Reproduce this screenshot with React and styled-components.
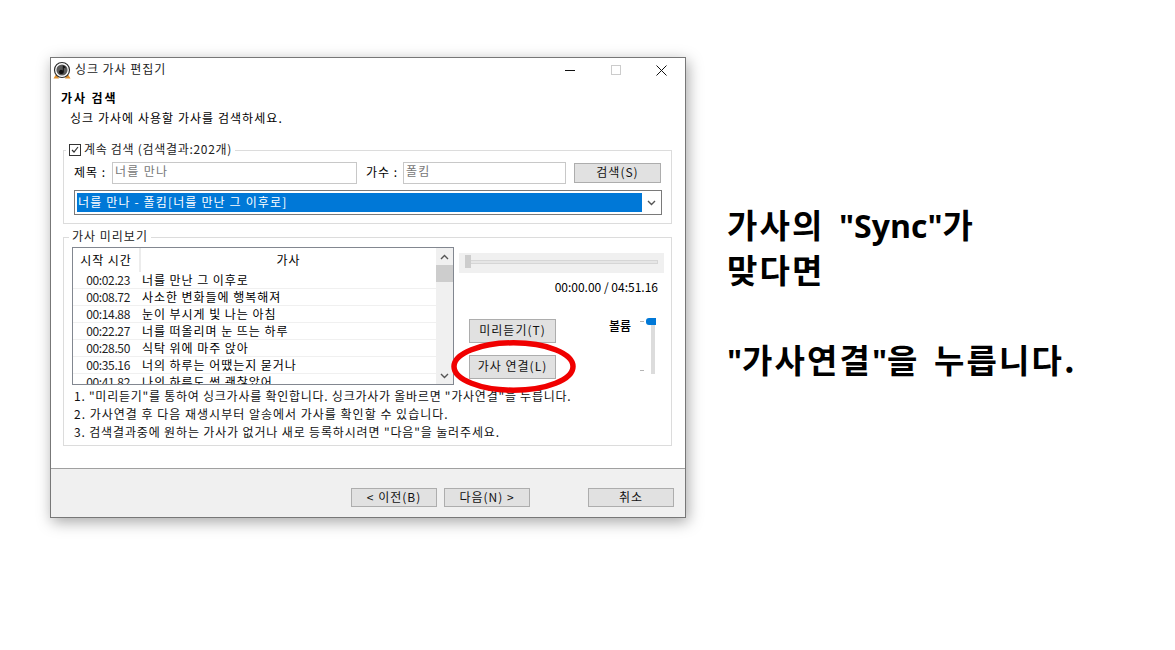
import styled, { createGlobalStyle } from 'styled-components';

const GlobalStyle = createGlobalStyle`
html, body {
    margin: 0;
    padding: 0;
    background: #fff;
}
* {
    box-sizing: border-box;
}
`;

const LYRICS = [
    ['00:02.23', '너를 만난 그 이후로'],
    ['00:08.72', '사소한 변화들에 행복해져'],
    ['00:14.88', '눈이 부시게 빛 나는 아침'],
    ['00:22.27', '너를 떠올리며 눈 뜨는 하루'],
    ['00:28.50', '식탁 위에 마주 앉아'],
    ['00:35.16', '너의 하루는 어땠는지 묻거나'],
    ['00:41.82', '나의 하루도 썩 괜찮았어'],
];

const Page = styled.div`
width: 1175px;
height: 650px;
padding: 57px 0 0 50px;
display: flex;
align-items: flex-start;
overflow: hidden;
background: #fff;
font-family: "Noto Sans CJK KR", "Liberation Sans", sans-serif;
font-size: 12px;
color: #000;
`;

const Window = styled.div`
position: relative;
width: 636px;
height: 461px;
flex-shrink: 0;
display: flex;
flex-direction: column;
background: #fff;
border: 1px solid #777;
box-shadow: 2px 4px 14px rgba(0, 0, 0, 0.35);
`;

const TitleBar = styled.div`
height: 24px;
flex-shrink: 0;
display: flex;
align-items: center;
padding-left: 2px;
`;

const TitleText = styled.span`
margin: 0 0 3px 4px;
letter-spacing: 0.95px;
color: #222;
`;

const WindowControls = styled.div`
margin-left: auto;
display: flex;
align-items: center;
height: 100%;
padding: 0 18px 0 0;
gap: 35px;
`;

const Body = styled.div`
flex: 1;
padding: 0 12px;
`;

const Heading = styled.div`
margin: 8px 0 0 -2px;
height: 16px;
line-height: 16px;
font-weight: 700;
letter-spacing: 1.9px;
`;

const SubHeading = styled.div`
margin: 4px 0 0 7px;
height: 16px;
line-height: 16px;
letter-spacing: 1.05px;
`;

const GroupBox = styled.div`
position: relative;
width: 609px;
margin-top: ${(props) => props.$top}px;
height: ${(props) => props.$height}px;
padding: ${(props) => props.$padding};
border: 1px solid #dcdcdc;
`;

const GroupLegend = styled.div`
position: absolute;
left: ${(props) => props.$left}px;
top: -10px;
height: 16px;
padding: 0 3px;
display: flex;
align-items: center;
gap: 3px;
line-height: 16px;
background: #fff;
letter-spacing: ${(props) => props.$spacing}px;
color: #222;
`;

const CheckBox = styled.span`
width: 12px;
height: 12px;
margin-top: 2px;
display: flex;
border: 1px solid #333;
background: #fff;
`;

const SearchRow = styled.div`
display: flex;
align-items: center;
height: 22px;
`;

const FieldLabel = styled.label`
width: ${(props) => props.$width}px;
margin-left: ${(props) => props.$left || 0}px;
padding-bottom: 3px;
letter-spacing: 1px;
white-space: pre;
`;

const TextField = styled.div`
width: ${(props) => props.$width}px;
height: 22px;
padding-left: 2px;
line-height: 16px;
border: 1px solid #c8c8c8;
color: #777;
letter-spacing: 1.3px;
`;

const Button = styled.button`
width: ${(props) => props.$width}px;
height: ${(props) => props.$height}px;
margin-left: ${(props) => props.$left || 0}px;
padding: 0 0 2px;
flex-shrink: 0;
font: inherit;
line-height: 1;
letter-spacing: 1px;
color: #111;
background: #e1e1e1;
border: 1px solid #adadad;
`;

const Combo = styled.div`
width: 588px;
height: 25px;
margin-top: 6px;
padding: 2px 0 2px 2px;
display: flex;
align-items: stretch;
border: 1px solid #7a7a7a;
`;

const ComboValue = styled.div`
width: 565px;
padding-left: 1px;
line-height: 17px;
color: #fff;
background: #0078d7;
letter-spacing: 1.15px;
`;

const ComboArrow = styled.div`
flex: 1;
display: flex;
align-items: center;
justify-content: center;
`;

const PreviewRow = styled.div`
display: flex;
gap: 5px;
`;

const LyricList = styled.div`
width: 382px;
height: 138px;
display: flex;
flex-shrink: 0;
overflow: hidden;
border: 1px solid #828790;
`;

const LyricTable = styled.div`
flex: 1;
overflow: hidden;
`;

const HeaderRow = styled.div`
display: flex;
height: 24px;
align-items: center;
`;

const HeaderCell = styled.div`
width: ${(props) => props.$width || 'auto'};
flex: ${(props) => (props.$width ? 'none' : 1)};
height: 100%;
line-height: 24px;
text-align: center;
letter-spacing: 0.95px;
border-right: ${(props) => (props.$width ? '2px solid #ececec' : 'none')};
`;

const LyricRow = styled.div`
display: flex;
height: 17px;
line-height: 16px;
border-bottom: 1px solid #f0f0f0;
`;

const TimeCell = styled.div`
width: 57px;
text-align: right;
color: #222;
letter-spacing: -0.35px;
`;

const TextCell = styled.div`
margin-left: 12px;
letter-spacing: 0.95px;
white-space: nowrap;
`;

const ScrollBar = styled.div`
width: 17px;
display: flex;
flex-direction: column;
align-items: center;
background: #f0f0f0;
`;

const ScrollButton = styled.div`
height: 17px;
width: 100%;
display: flex;
align-items: center;
justify-content: center;
`;

const ScrollThumb = styled.div`
width: 100%;
height: 17px;
background: #cdcdcd;
`;

const ScrollGap = styled.div`
flex: 1;
`;

const PlayerColumn = styled.div`
width: 205px;
padding-top: 6px;
`;

const SeekPanel = styled.div`
position: relative;
height: 20px;
padding: 7px 6px 0 7px;
background: #f0f0f0;
`;

const SeekTrack = styled.div`
height: 4px;
background: #e6e6e6;
border: 1px solid #d6d6d6;
`;

const SeekThumb = styled.div`
position: absolute;
left: 6px;
top: 2px;
width: 6px;
height: 13px;
background: #cdcdcd;
`;

const TimeLabel = styled.div`
margin-top: 6px;
height: 16px;
padding-right: 6px;
line-height: 16px;
text-align: right;
letter-spacing: 0;
`;

const Controls = styled.div`
display: flex;
margin: 24px 0 0 10px;
`;

const ButtonStack = styled.div`
display: flex;
flex-direction: column;
gap: 12px;
`;

const VolumeLabel = styled.div`
margin: -1px 0 0 53px;
height: 16px;
line-height: 16px;
font-size: 12px;
font-weight: 500;
`;

const VolumeSlider = styled.div`
position: relative;
width: 17px;
height: 56px;
margin: -1px 0 0 9px;
display: flex;
flex-direction: column;
justify-content: space-between;
padding: 3px 0 3px 0;
`;

const VolumeTick = styled.span`
display: block;
width: 4px;
height: 1px;
background: #b4b4b4;
`;

const VolumeTrack = styled.div`
position: absolute;
left: 11px;
top: 2px;
width: 4px;
height: 54px;
background: #dcdcdc;
`;

const VolumeThumb = styled.div`
position: absolute;
left: 6px;
top: 0;
width: 10px;
height: 7px;
border-radius: 3px 0 0 3px;
background: #0078d7;
`;

const Notes = styled.div`
margin: 2px 0 0 2px;
`;

const NoteLine = styled.div`
height: 18px;
line-height: 18px;
letter-spacing: ${(props) => props.$spacing}px;
white-space: nowrap;
color: #111;
`;

const Footer = styled.div`
height: 49px;
flex-shrink: 0;
display: flex;
justify-content: flex-end;
padding: 19px 11px 0 0;
background: #f0f0f0;
border-top: 1px solid #a0a0a0;
`;

const Highlight = styled.svg`
position: absolute;
left: 400px;
top: 282px;
width: 126px;
height: 54px;
pointer-events: none;
`;

const Caption = styled.div`
margin: 145px 0 0 41px;
font-size: 33px;
font-weight: 700;
line-height: 45px;
white-space: nowrap;
color: #000;
`;

const CaptionLine = styled.div`
height: 45px;
letter-spacing: 2.1px;
word-spacing: 5px;
`;

const CaptionLatin = styled.span`
font-family: "Open Sans", sans-serif;
font-size: 32px;
letter-spacing: 0;
`;

function DiscIcon() {
    return (
        <svg width="18" height="18" viewBox="0 0 18 18">
            <path d="M0.5 17.5L3.5 12.5 6 17.5zM12 17.5L14.5 12.5 17.5 17.5z" fill="#e0902c" />
            <circle cx="9" cy="9" r="7.5" fill="#fff" stroke="#2c2c2c" strokeWidth="1.2" />
            <circle cx="9" cy="9" r="5.6" fill="#5a5a5a" />
            <path d="M9.8 4.2l2.6 1.6v1.6L10.8 6.5V11a2.4 2 0 1 1-1-1.6z" fill="#111" />
        </svg>
    );
}

function Chevron({ up, color }) {
    return (
        <svg width="9" height="6" viewBox="0 0 9 6">
            <path
                d={up ? 'M1 5l3.5-3.5L8 5' : 'M1 1l3.5 3.5L8 1'}
                fill="none"
                stroke={color}
                strokeWidth="1.4"
            />
        </svg>
    );
}

function WindowButtons() {
    return (
        <WindowControls>
            <svg width="11" height="11" viewBox="0 0 11 11">
                <path d="M0 5.5h10" stroke="#111" />
            </svg>
            <svg width="10" height="10" viewBox="0 0 10 10">
                <rect x="0.5" y="0.5" width="9" height="9" fill="none" stroke="#ccc" />
            </svg>
            <svg width="11" height="11" viewBox="0 0 11 11">
                <path d="M0.5 0.5l10 10M10.5 0.5l-10 10" stroke="#111" fill="none" />
            </svg>
        </WindowControls>
    );
}

export default function App() {
    return (
        <Page>
            <GlobalStyle />
            <Window>
                <TitleBar>
                    <DiscIcon />
                    <TitleText>싱크 가사 편집기</TitleText>
                    <WindowButtons />
                </TitleBar>
                <Body>
                    <Heading>가사 검색</Heading>
                    <SubHeading>싱크 가사에 사용할 가사를 검색하세요.</SubHeading>

                    <GroupBox $top={24} $height={74} $padding="11px 0 0 10px">
                        <GroupLegend $left={2} $spacing={0.7}>
                            <CheckBox>
                                <svg width="10" height="10" viewBox="0 0 10 10">
                                    <path d="M2 5l2 2 4-5" fill="none" stroke="#333" strokeWidth="1.2" />
                                </svg>
                            </CheckBox>
                            계속 검색 (검색결과:202개)
                        </GroupLegend>
                        <SearchRow>
                            <FieldLabel $width={38}>제목 :</FieldLabel>
                            <TextField $width={245}>너를 만나</TextField>
                            <FieldLabel $width={37} $left={9}>가수 :</FieldLabel>
                            <TextField $width={163}>폴킴</TextField>
                            <Button $width={87} $height={20} $left={8}>검색(S)</Button>
                        </SearchRow>
                        <Combo>
                            <ComboValue>너를 만나 - 폴킴[너를 만난 그 이후로]</ComboValue>
                            <ComboArrow>
                                <Chevron color="#555" />
                            </ComboArrow>
                        </Combo>
                    </GroupBox>

                    <GroupBox $top={13} $height={209} $padding="9px 0 0 8px">
                        <GroupLegend $left={5} $spacing={1}>가사 미리보기</GroupLegend>
                        <PreviewRow>
                            <LyricList>
                                <LyricTable>
                                    <HeaderRow>
                                        <HeaderCell $width="68px">시작 시간</HeaderCell>
                                        <HeaderCell>가사</HeaderCell>
                                    </HeaderRow>
                                    {LYRICS.map(([time, text]) => (
                                        <LyricRow key={time}>
                                            <TimeCell>{time}</TimeCell>
                                            <TextCell>{text}</TextCell>
                                        </LyricRow>
                                    ))}
                                </LyricTable>
                                <ScrollBar>
                                    <ScrollButton>
                                        <Chevron up color="#555" />
                                    </ScrollButton>
                                    <ScrollThumb />
                                    <ScrollGap />
                                    <ScrollButton>
                                        <Chevron color="#555" />
                                    </ScrollButton>
                                </ScrollBar>
                            </LyricList>
                            <PlayerColumn>
                                <SeekPanel>
                                    <SeekTrack />
                                    <SeekThumb />
                                </SeekPanel>
                                <TimeLabel>00:00.00 / 04:51.16</TimeLabel>
                                <Controls>
                                    <ButtonStack>
                                        <Button $width={87} $height={24}>미리듣기(T)</Button>
                                        <Button $width={87} $height={24}>가사 연결(L)</Button>
                                    </ButtonStack>
                                    <VolumeLabel>볼륨</VolumeLabel>
                                    <VolumeSlider>
                                        <VolumeTick />
                                        <VolumeTick />
                                        <VolumeTrack />
                                        <VolumeThumb />
                                    </VolumeSlider>
                                </Controls>
                            </PlayerColumn>
                        </PreviewRow>
                        <Notes>
                            <NoteLine $spacing={0.75}>1. "미리듣기"를 통하여 싱크가사를 확인합니다. 싱크가사가 올바르면 "가사연결"을 누릅니다.</NoteLine>
                            <NoteLine $spacing={1}>2. 가사연결 후 다음 재생시부터 알송에서 가사를 확인할 수 있습니다.</NoteLine>
                            <NoteLine $spacing={0.85}>3. 검색결과중에 원하는 가사가 없거나 새로 등록하시려면 "다음"을 눌러주세요.</NoteLine>
                        </Notes>
                    </GroupBox>
                </Body>
                <Footer>
                    <Button $width={86} $height={19}>&lt; 이전(B)</Button>
                    <Button $width={86} $height={19} $left={7}>다음(N) &gt;</Button>
                    <Button $width={86} $height={19} $left={58}>취소</Button>
                </Footer>
                <Highlight viewBox="0 0 126 54">
                    <ellipse cx="62.5" cy="26.5" rx="59.5" ry="23.7" fill="none" stroke="#f00000" strokeWidth="5.5" />
                </Highlight>
            </Window>
            <Caption>
                <CaptionLine>가사의 <CaptionLatin>"Sync"</CaptionLatin>가</CaptionLine>
                <CaptionLine>맞다면</CaptionLine>
                <CaptionLine />
                <CaptionLine><CaptionLatin>"</CaptionLatin>가사연결<CaptionLatin>"</CaptionLatin>을 누릅니다.</CaptionLine>
            </Caption>
        </Page>
    );
}
